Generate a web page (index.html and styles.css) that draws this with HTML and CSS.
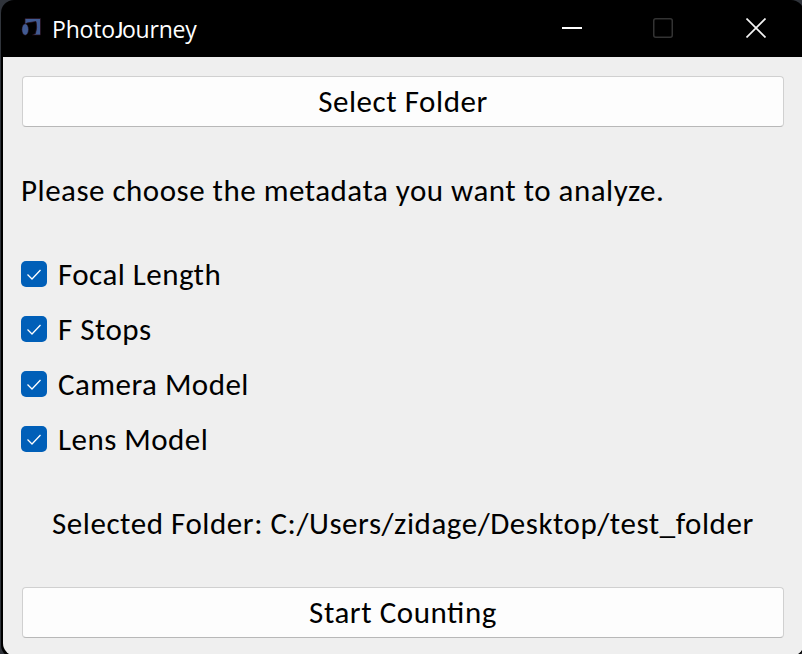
FILE: index.html
```html
<!DOCTYPE html>
<html lang="en">
<head>
<meta charset="utf-8">
<title>PhotoJourney</title>
<link rel="stylesheet" href="styles.css">
</head>
<body>
<div class="window">
  <header class="titlebar">
    <svg class="app-icon" width="22" height="22" viewBox="0 0 22 22">
      <path d="M4 1.500H19.500V18H11.500L14.500 16.500Q16.500 10 15 4.500L6 6L4 7.500Z" fill="#415b93" stroke="#260b14" stroke-width=".7"/>
      <ellipse cx="4.200" cy="12.500" rx="3.300" ry="5.700" fill="#415b93" stroke="#260b14" stroke-width=".5"/>
    </svg>
    <span class="title">Photo<span class="cap-j">J</span>ourney</span>
    <div class="controls">
      <svg width="20" height="20" viewBox="0 0 20 20"><path d="M0 10H20" stroke="#fff" stroke-width="2"/></svg>
      <svg width="20" height="20" viewBox="0 0 20 20"><rect x=".75" y=".75" width="18.500" height="18.500" rx="2" fill="none" stroke="#333" stroke-width="1.500"/></svg>
      <svg width="20" height="20" viewBox="0 0 20 20"><path d="M.5.5l19 19M19.500.5l-19 19" stroke="#f4f4f4" stroke-width="1.700"/></svg>
    </div>
  </header>
  <main class="content">
    <button class="button">Select Folder</button>
    <p class="prompt">Please choose the metadata you want to analyze.</p>
    <div class="options">
      <label class="option"><svg class="check" viewBox="0 0 26 26"><path d="M6.500 13.500L11 18L19.500 9"/></svg><span>Focal Length</span></label>
      <label class="option"><svg class="check" viewBox="0 0 26 26"><path d="M6.500 13.500L11 18L19.500 9"/></svg><span>F Stops</span></label>
      <label class="option"><svg class="check" viewBox="0 0 26 26"><path d="M6.500 13.500L11 18L19.500 9"/></svg><span>Camera Model</span></label>
      <label class="option"><svg class="check" viewBox="0 0 26 26"><path d="M6.500 13.500L11 18L19.500 9"/></svg><span>Lens Model</span></label>
    </div>
    <p class="selected">Selected Folder: C:/Users/zidage/Desktop/test_folder</p>
    <button class="button">Start Counting</button>
  </main>
</div>
</body>
</html>
```
FILE: styles.css
```css
* { box-sizing: border-box; }
html { height: 654px; overflow: hidden; }
body { margin: 0; height: 654px; overflow: hidden; background: #30343b; }
.window {
  margin-left: 1px;
  width: 803px;
  height: 658px;
  padding-left: 2px;
  background: #000;
  border-radius: 13px;
  overflow: hidden;
}
.titlebar { height: 57px; display: flex; align-items: center; padding: 0 0 1px 18px; color: #fff; }
.app-icon { margin-right: 9px; flex: none; }
.title { font: 23px/30px "Open Sans", sans-serif; letter-spacing: -0.18px; padding-top: 2px; white-space: nowrap; }
.cap-j { font-family: Carlito, Lato, sans-serif; font-size: 25.5px; line-height: 1; margin-right: -1px; }
.controls { margin-left: auto; display: flex; gap: 71px; padding-right: 38px; }
.controls svg { display: block; }
.controls svg:last-child { margin-left: 2px; }
.content {
  height: 599px;
  padding: 19px 20px 0 18px;
  background: #efefef;
  border-radius: 0 0 13px 13px;
  color: #000;
  font: 31px/36px Carlito, Lato, sans-serif;
  letter-spacing: 0.5px;
  font-feature-settings: "liga" 1;
  white-space: nowrap;
}
.button {
  display: block;
  width: 762px;
  height: 51px;
  margin: 0 0 0 1px;
  padding: 0 0 2px;
  border: 1px solid #d0d0d0;
  border-bottom-color: #b8b8b8;
  border-radius: 4px;
  background: #fdfdfd;
  color: #000;
  font: inherit;
  letter-spacing: 0.55px;
  font-feature-settings: inherit;
}
.prompt { margin: 45px 0 0; }
.options { margin-top: 39px; display: grid; grid-auto-rows: 55px; }
.option { display: flex; align-items: center; gap: 11px; letter-spacing: 0.47px; }
.option span { padding-bottom: 2px; }
.check { width: 26px; height: 26px; background: #005fb8; border-radius: 5px; flex: none; margin-top: -2px; }
.check path { fill: none; stroke: #fff; stroke-width: 1.300; }
.selected { margin: 38px 0 46px 31px; letter-spacing: 0.55px; }
```
